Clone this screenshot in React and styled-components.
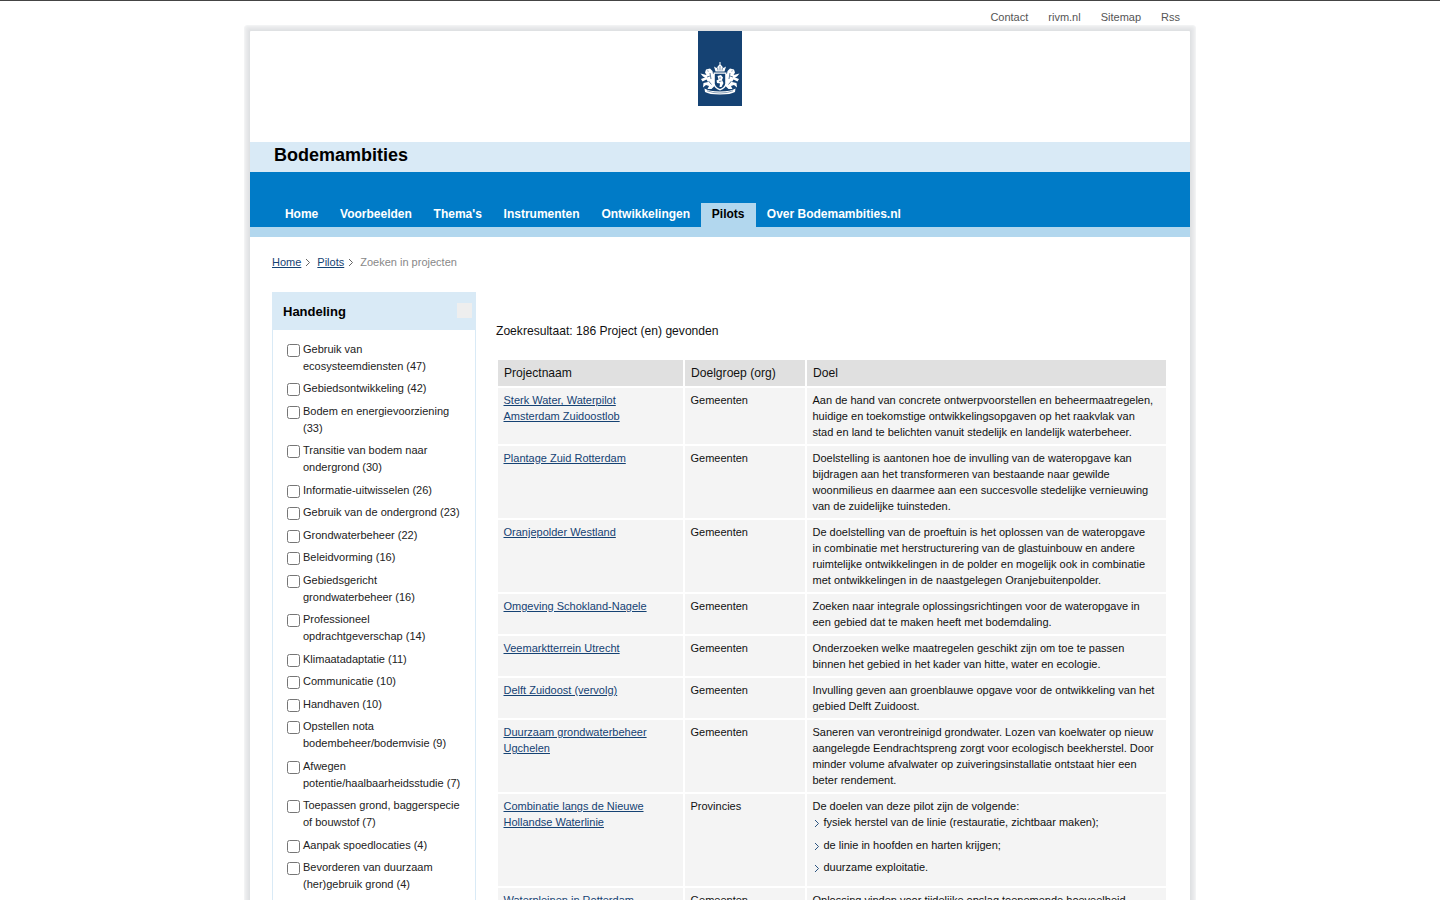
import React from "react";
import styled, { createGlobalStyle } from "styled-components";

const GlobalStyle = createGlobalStyle`
    html, body {
        margin: 0;
        height: 100%;
        overflow: hidden;
        background: #fff;
    }
    body {
        border-top: 1px solid #444;
        box-sizing: border-box;
        font-family: "Liberation Sans", Arial, sans-serif;
        font-size: 11px;
        color: #111;
    }
    a {
        color: #154273;
    }
`;

const Wrapper = styled.div`
    width: 940px;
    margin: 0 auto;
    height: 899px;
`;

const TopLinks = styled.div`
    display: flex;
    justify-content: flex-end;
    gap: 20px;
    height: 30px;
    padding: 10px 10px 0 0;
    box-sizing: border-box;
    line-height: 13px;
    color: #555;
`;

const Frame = styled.div`
    background: #fff;
    border-radius: 1px;
    box-shadow: 0 0 0 1px #dfe1e3, 0 0 0 2px #e2e4e6, 0 0 0 3px #e6e7e9, 0 0 0 4px #e9eaec, 0 0 0 5px #edeeef, 0 0 0 6px #f2f3f4;
    height: 900px;
`;

const LogoRow = styled.div`
    display: flex;
    justify-content: center;
    height: 111px;
`;

const Logo = styled.div`
    width: 44px;
    height: 75px;
    background: #154273;
    display: flex;
    align-items: flex-end;
    justify-content: center;
`;

const TitleBar = styled.div`
    background: #d9eaf6;
    height: 30px;
    padding-left: 24px;
    font-size: 18px;
    font-weight: bold;
    line-height: 27px;
    color: #000;
`;

const NavBar = styled.div`
    background: #007bc7;
    height: 55px;
    padding: 31px 0 0 24px;
    box-sizing: border-box;
    display: flex;
`;

const NavItem = styled.div`
    padding: 0 ${(p) => (p.$active ? "11.4px" : "10.9px")} 0 10.9px;
    font-size: 12px;
    font-weight: bold;
    line-height: 22px;
    color: ${(p) => (p.$active ? "#000" : "#fff")};
    background: ${(p) => (p.$active ? "#b2d7ee" : "transparent")};
`;

const NavStrip = styled.div`
    background: #b2d7ee;
    height: 10px;
`;

const Crumbs = styled.div`
    display: flex;
    align-items: center;
    padding-left: 22px;
    height: 50px;
    line-height: 13px;
    color: #888;
`;

const CrumbSep = styled.span`
    display: inline-flex;
    margin: 0 6px 0 4px;
`;

const Columns = styled.div`
    display: flex;
    align-items: flex-start;
    padding: 5px 22px 0 22px;
`;

const Sidebar = styled.div`
    width: 204px;
    flex: none;
    box-sizing: border-box;
    border: 1px solid #d9eaf6;
    border-top: 0;
`;

const SideHead = styled.div`
    position: relative;
    background: #d9eaf6;
    height: 38px;
    margin: 0 -1px;
    padding-left: 11px;
    font-size: 13px;
    font-weight: bold;
    line-height: 39px;
    color: #000;
`;

const SideToggle = styled.span`
    position: absolute;
    right: 4px;
    top: 11px;
    width: 15px;
    height: 15px;
    background: #eee;
`;

const SideList = styled.div`
    padding: 10.7px 14px 20px 14px;
`;

const Option = styled.label`
    display: flex;
    align-items: flex-start;
    margin-bottom: 5.5px;
    line-height: 17px;
    color: #222;
`;

const Check = styled.input`
    flex: none;
    width: 13px;
    height: 13px;
    margin: 3px 3px 0 0;
`;

const Main = styled.div`
    flex: 1;
    padding-left: 20px;
`;

const Result = styled.div`
    margin-top: 31px;
    font-size: 12.1px;
    line-height: 16px;
    height: 35px;
    color: #111;
`;

const Table = styled.table`
    border-collapse: separate;
    border-spacing: 2px;
    width: 672px;
    table-layout: fixed;
`;

const Th = styled.th`
    background: #e0e0e0;
    height: 26px;
    padding: 0 6px;
    font-size: 12.1px;
    font-weight: normal;
    text-align: left;
    color: #111;
`;

const Td = styled.td`
    background: #f4f4f4;
    padding: 4px 11px 4px 5.5px;
    vertical-align: top;
    line-height: 16px;
    color: #111;
`;

const NameCell = styled(Td)`
    padding-right: 32px;
`;

const BulletList = styled.ul`
    list-style: none;
    margin: 0;
    padding: 0 0 7px 0;
`;

const Bullet = styled.li`
    display: flex;
    align-items: center;
    margin-bottom: 6.5px;
    &:last-child {
        margin-bottom: 0;
    }
`;

const BulletMark = styled.span`
    display: inline-flex;
    width: 11px;
    box-sizing: border-box;
    flex: none;
    padding: 3px 0 0 1.5px;
`;

const Chevron = ({ color }) => (
    <svg width="6" height="9" viewBox="0 0 6 9">
        <path d="M1 1 L4.500 4.500 L1 8" fill="none" stroke={color} strokeWidth="0.9" />
    </svg>
);

// half of the coat of arms, drawn once and mirrored
const EmblemHalf = () => (
    <g>
        {/* lion */}
        <path
            d="M8 7.500 L12 6.500 L14.500 9 L15 12 L16.500 12 L16.500 24 L13.500 27 L9.500 27 L11 24 L8 23 L5 25.500 L5.500 21 L10 20 L8.500 17.500 L4.500 19.500 L3 17 L7 15.500 L5 14.500 L2.500 11.500 L6.500 12.500 L8.500 13 L7 10.500 Z"
            fill="#fff"
        />
        <path d="M9.500 8.800 L10.500 9.200 M12 11 L13 17 M9 15 L12 14 M10.500 19 L13.500 22.500" stroke="#154273" strokeWidth="0.7" fill="none" />
        {/* ribbon */}
        <path d="M6.500 26.500 Q11 29.500 22 29.500 L22 32.500 Q11 32.500 7 30 Z" fill="#fff" />
        <path d="M9 28.800 Q14 31 22 31" stroke="#154273" strokeWidth="0.5" fill="none" />
    </g>
);

function Emblem() {
    return (
        <svg width="44" height="44" viewBox="0 0 44 44">
            <EmblemHalf />
            <g transform="translate(44,0) scale(-1,1)">
                <EmblemHalf />
            </g>
            {/* crown */}
            <rect x="21.500" y="0" width="1" height="2.500" fill="#fff" />
            <path d="M17.500 9.500 L16 4.500 L18.500 6 L20.500 3.500 L22 2 L23.500 3.500 L25.500 6 L28 4.500 L26.500 9.500 Z" fill="#fff" />
            <path d="M19.500 5.500 L20 8.500 M22 4 L22 8.500 M24.500 5.500 L24 8.500" stroke="#154273" strokeWidth="0.6" />
            {/* shield */}
            <path d="M15.500 10.500 L28.500 10.500 L28.500 22 Q28 26 22 28.500 Q16 26 15.500 22 Z" fill="#fff" />
            <path d="M16.800 11.800 L27.200 11.800 L27.200 21.500 Q26.800 25 22 27 Q17.200 25 16.800 21.500 Z" fill="#154273" />
            <path d="M19.500 14 L23 13 L25 15.500 L24 18 L25.500 21 L23.500 25 L21.500 25 L22 21.500 L19 21 L18.500 18.500 L20.500 17.500 Z" fill="#fff" />
            <path d="M21 16 L23 16 M21 19.500 L23.500 19" stroke="#154273" strokeWidth="0.6" />
        </svg>
    );
}

const filters = [
    "Gebruik van ecosysteemdiensten (47)",
    "Gebiedsontwikkeling (42)",
    "Bodem en energievoorziening (33)",
    "Transitie van bodem naar ondergrond (30)",
    "Informatie-uitwisselen (26)",
    "Gebruik van de ondergrond (23)",
    "Grondwaterbeheer (22)",
    "Beleidvorming (16)",
    "Gebiedsgericht grondwaterbeheer (16)",
    "Professioneel opdrachtgeverschap (14)",
    "Klimaatadaptatie (11)",
    "Communicatie (10)",
    "Handhaven (10)",
    "Opstellen nota bodembeheer/bodemvisie (9)",
    "Afwegen potentie/haalbaarheidsstudie (7)",
    "Toepassen grond, baggerspecie of bouwstof (7)",
    "Aanpak spoedlocaties (4)",
    "Bevorderen van duurzaam (her)gebruik grond (4)",
];

const projects = [
    ["Sterk Water, Waterpilot Amsterdam Zuidoostlob", "Gemeenten", "Aan de hand van concrete ontwerpvoorstellen en beheermaatregelen, huidige en toekomstige ontwikkelingsopgaven op het raakvlak van stad en land te belichten vanuit stedelijk en landelijk waterbeheer."],
    ["Plantage Zuid Rotterdam", "Gemeenten", "Doelstelling is aantonen hoe de invulling van de wateropgave kan bijdragen aan het transformeren van bestaande naar gewilde woonmilieus en daarmee aan een succesvolle stedelijke vernieuwing van de zuidelijke tuinsteden."],
    ["Oranjepolder Westland", "Gemeenten", "De doelstelling van de proeftuin is het oplossen van de wateropgave in combinatie met herstructurering van de glastuinbouw en andere ruimtelijke ontwikkelingen in de polder en mogelijk ook in combinatie met ontwikkelingen in de naastgelegen Oranjebuitenpolder."],
    ["Omgeving Schokland-Nagele", "Gemeenten", "Zoeken naar integrale oplossingsrichtingen voor de wateropgave in een gebied dat te maken heeft met bodemdaling."],
    ["Veemarktterrein Utrecht", "Gemeenten", "Onderzoeken welke maatregelen geschikt zijn om toe te passen binnen het gebied in het kader van hitte, water en ecologie."],
    ["Delft Zuidoost (vervolg)", "Gemeenten", "Invulling geven aan groenblauwe opgave voor de ontwikkeling van het gebied Delft Zuidoost."],
    ["Duurzaam grondwaterbeheer Ugchelen", "Gemeenten", "Saneren van verontreinigd grondwater. Lozen van koelwater op nieuw aangelegde Eendrachtspreng zorgt voor ecologisch beekherstel. Door minder volume afvalwater op zuiveringsinstallatie ontstaat hier een beter rendement."],
    ["Combinatie langs de Nieuwe Hollandse Waterlinie", "Provincies", null],
    ["Waterpleinen in Rotterdam", "Gemeenten", "Oplossing vinden voor tijdelijke opslag toenemende hoeveelheid regenwater in dichtbebouwde wijken."],
];

const goals = [
    "fysiek herstel van de linie (restauratie, zichtbaar maken);",
    "de linie in hoofden en harten krijgen;",
    "duurzame exploitatie.",
];

const navItems = ["Home", "Voorbeelden", "Thema's", "Instrumenten", "Ontwikkelingen", "Pilots", "Over Bodemambities.nl"];

export default function App() {
    return (
        <Wrapper>
            <GlobalStyle />
            <TopLinks>
                <span>Contact</span>
                <span>rivm.nl</span>
                <span>Sitemap</span>
                <span>Rss</span>
            </TopLinks>
            <Frame>
                <LogoRow>
                    <Logo>
                        <Emblem />
                    </Logo>
                </LogoRow>
                <TitleBar>Bodemambities</TitleBar>
                <NavBar>
                    {navItems.map((item) => (
                        <NavItem key={item} $active={item === "Pilots"}>{item}</NavItem>
                    ))}
                </NavBar>
                <NavStrip />
                <Crumbs>
                    <a href="#home">Home</a>
                    <CrumbSep><Chevron color="#555" /></CrumbSep>
                    <a href="#pilots">Pilots</a>
                    <CrumbSep><Chevron color="#555" /></CrumbSep>
                    <span>Zoeken in projecten</span>
                </Crumbs>
                <Columns>
                    <Sidebar>
                        <SideHead>
                            Handeling
                            <SideToggle />
                        </SideHead>
                        <SideList>
                            {filters.map((f) => (
                                <Option key={f}>
                                    <Check type="checkbox" />
                                    <span>{f}</span>
                                </Option>
                            ))}
                        </SideList>
                    </Sidebar>
                    <Main>
                        <Result>Zoekresultaat: 186 Project (en) gevonden</Result>
                        <Table>
                            <colgroup>
                                <col style={{ width: 185 }} />
                                <col style={{ width: 120 }} />
                                <col />
                            </colgroup>
                            <thead>
                                <tr>
                                    <Th>Projectnaam</Th>
                                    <Th>Doelgroep (org)</Th>
                                    <Th>Doel</Th>
                                </tr>
                            </thead>
                            <tbody>
                                {projects.map(([name, group, goal]) => (
                                    <tr key={name}>
                                        <NameCell><a href="#project">{name}</a></NameCell>
                                        <Td>{group}</Td>
                                        <Td>
                                            {goal || (
                                                <>
                                                    De doelen van deze pilot zijn de volgende:
                                                    <BulletList>
                                                        {goals.map((g) => (
                                                            <Bullet key={g}>
                                                                <BulletMark><Chevron color="#154273" /></BulletMark>
                                                                {g}
                                                            </Bullet>
                                                        ))}
                                                    </BulletList>
                                                </>
                                            )}
                                        </Td>
                                    </tr>
                                ))}
                            </tbody>
                        </Table>
                    </Main>
                </Columns>
            </Frame>
        </Wrapper>
    );
}
